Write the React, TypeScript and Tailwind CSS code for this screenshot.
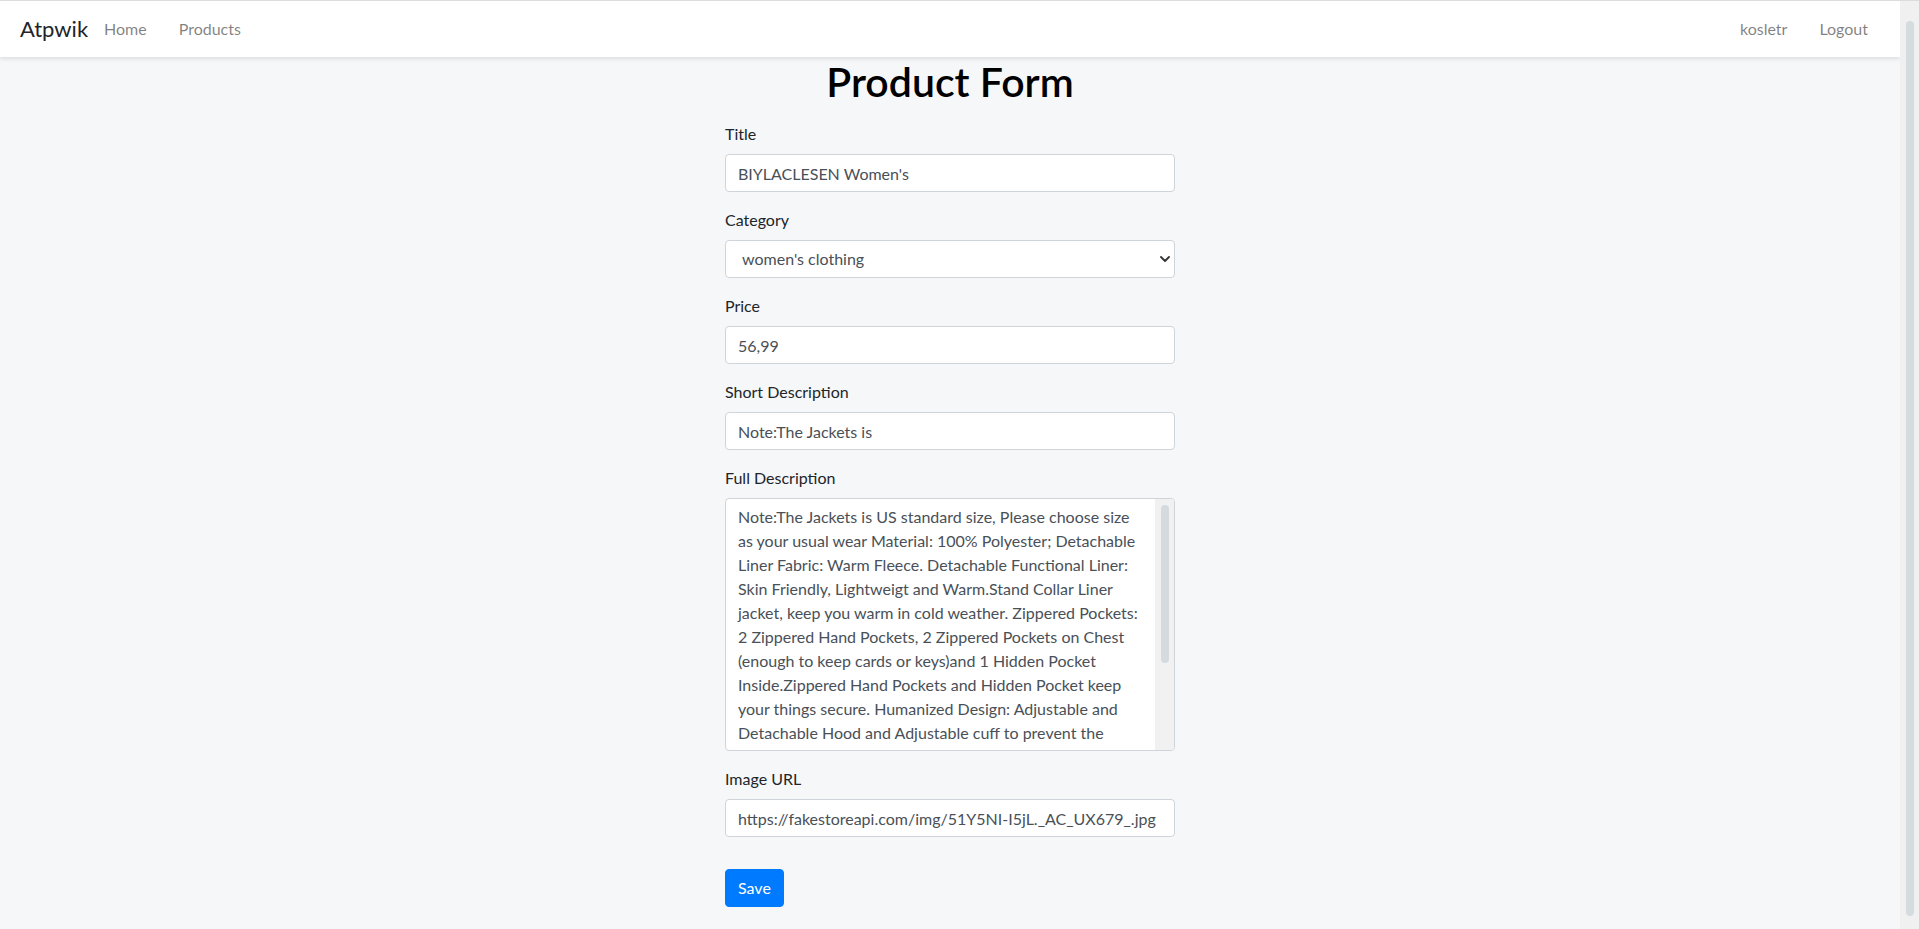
const FULL_DESCRIPTION = [
  "Note:The Jackets is US standard size, Please choose size",
  "as your usual wear Material: 100% Polyester; Detachable",
  "Liner Fabric: Warm Fleece. Detachable Functional Liner:",
  "Skin Friendly, Lightweigt and Warm.Stand Collar Liner",
  "jacket, keep you warm in cold weather. Zippered Pockets:",
  "2 Zippered Hand Pockets, 2 Zippered Pockets on Chest",
  "(enough to keep cards or keys)and 1 Hidden Pocket",
  "Inside.Zippered Hand Pockets and Hidden Pocket keep",
  "your things secure. Humanized Design: Adjustable and",
  "Detachable Hood and Adjustable cuff to prevent the",
  "wind and water,for a comfortable fit. 3 in 1 Detachable",
  "Design provide more convenience, you can separate the",
  "coat and inner as needed, or wear it together. It is",
  "suitable for different season and help you adapt to",
  "different climates",
].join("\n");

const inputClass =
  "block h-[38px] w-full rounded-[4px] border border-[#ced4da] bg-white px-3 text-base text-[#495057] outline-none";

function Field({ label, children }: { label: string; children: React.ReactNode }) {
  return (
    <div className="mb-4">
      <label className="mb-2 block text-base leading-6 text-[#212529]">{label}</label>
      {children}
    </div>
  );
}

function Navbar() {
  return (
    <nav className="flex h-14 items-center justify-between bg-white pl-5 pr-4 shadow-[0_2px_4px_rgba(0,0,0,0.1)]">
      <div className="flex items-center">
        <a className="text-[22px] leading-8 text-[#212529]">Atpwik</a>
        <a className="px-4 text-base text-black/50">Home</a>
        <a className="px-4 text-base text-black/50">Products</a>
      </div>
      <div className="flex items-center">
        <a className="px-4 text-base text-black/50">kosletr</a>
        <a className="px-4 text-base text-black/50">Logout</a>
      </div>
    </nav>
  );
}

export default function App() {
  return (
    <div
      className="flex h-[929px] overflow-hidden border-t border-[#dcdcdc] bg-[#f6f7f9]"
      style={{ fontFamily: "Lato, sans-serif" }}
    >
      <div className="flex flex-1 flex-col">
        <Navbar />
        <main className="mx-auto w-[450px] pt-[1px]">
          <h1 className="mb-4 text-center text-[41px] font-semibold leading-[48px] text-black">
            Product Form
          </h1>
          <form onSubmit={(e) => e.preventDefault()}>
            <Field label="Title">
              <input className={inputClass} defaultValue="BIYLACLESEN Women's" />
            </Field>
            <Field label="Category">
              <div className="flex h-[38px] w-full items-center rounded-[4px] border border-[#ced4da] bg-white pr-[4px]">
                <select
                  className="h-full flex-1 appearance-none bg-transparent pl-4 text-base text-[#495057] outline-none"
                  defaultValue="women's clothing"
                >
                  <option>men's clothing</option>
                  <option>jewelery</option>
                  <option>electronics</option>
                  <option>women's clothing</option>
                </select>
                <svg width="10" height="6" viewBox="0 0 10 6" fill="none" className="shrink-0">
                  <path d="M1 1l4 4 4-4" stroke="#333" strokeWidth="1.8" strokeLinecap="round" strokeLinejoin="round" />
                </svg>
              </div>
            </Field>
            <Field label="Price">
              <input className={inputClass} defaultValue="56,99" />
            </Field>
            <Field label="Short Description">
              <input className={inputClass} defaultValue="Note:The Jackets is" />
            </Field>
            <Field label="Full Description">
              <div className="flex h-[253px] w-full overflow-hidden rounded-[4px] border border-[#ced4da] bg-white">
                <textarea
                  rows={10}
                  wrap="off"
                  defaultValue={FULL_DESCRIPTION}
                  className="h-full flex-1 resize-none overflow-hidden bg-transparent px-3 py-[6px] text-base leading-6 text-[#495057] outline-none"
                />
                <div className="flex w-[19px] shrink-0 justify-center bg-[#f1f1f1] pt-[6px]">
                  <div className="h-[158px] w-2 rounded-full bg-[#d4dadd]" />
                </div>
              </div>
            </Field>
            <Field label="Image URL">
              <input
                className={inputClass}
                defaultValue="https://fakestoreapi.com/img/51Y5NI-I5jL._AC_UX679_.jpg"
              />
            </Field>
            <button
              type="submit"
              className="mt-4 h-[38px] rounded-[4px] border border-[#007bff] bg-[#007bff] px-3 text-base text-white"
            >
              Save
            </button>
          </form>
        </main>
      </div>
      <div className="flex w-[19px] shrink-0 justify-center bg-[#f0f0f0] pt-5">
        <div className="h-[895px] w-2 rounded-full bg-[#d5dcdf]" />
      </div>
    </div>
  );
}
